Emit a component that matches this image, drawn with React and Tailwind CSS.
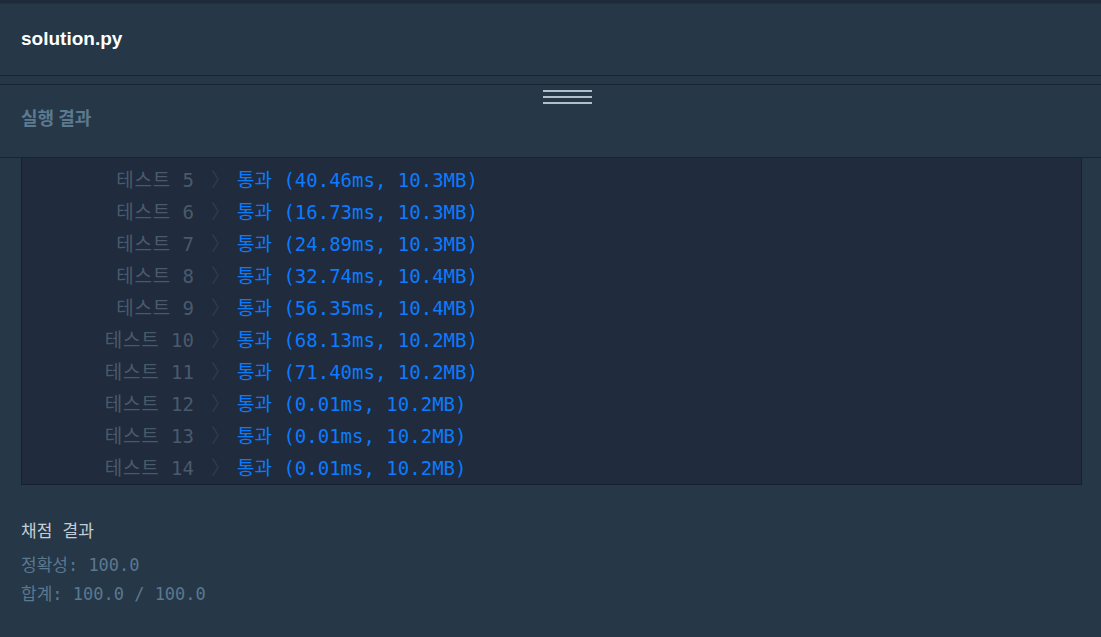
import React from "react";

const rows = [
  ["5", "(40.46ms, 10.3MB)"],
  ["6", "(16.73ms, 10.3MB)"],
  ["7", "(24.89ms, 10.3MB)"],
  ["8", "(32.74ms, 10.4MB)"],
  ["9", "(56.35ms, 10.4MB)"],
  ["10", "(68.13ms, 10.2MB)"],
  ["11", "(71.40ms, 10.2MB)"],
  ["12", "(0.01ms, 10.2MB)"],
  ["13", "(0.01ms, 10.2MB)"],
  ["14", "(0.01ms, 10.2MB)"],
];

const mono = "font-['DejaVu_Sans_Mono','Noto_Sans_CJK_KR',monospace]";

export default function App() {
  return (
    <div className="relative w-full h-[637px] bg-[#263747] overflow-hidden flex flex-col">
      <div className="h-[3px] bg-[#1e2a38] shrink-0" />
      <div className="h-[1px] bg-[#223142] shrink-0" />
      <div className="h-[72px] shrink-0 flex items-center px-[21px] border-b border-[#1a2532]">
        <span className="font-['Liberation_Sans','Noto_Sans_CJK_KR',sans-serif] font-bold text-[19px] text-white">
          solution.py
        </span>
      </div>
      <div className="h-[8px] shrink-0" />
      <div className="h-[74px] shrink-0 flex items-center px-[21px] pb-[7px] border-y border-[#1a2532]">
        <span className="font-['Noto_Sans_CJK_KR',sans-serif] font-bold text-[18px] text-[#5b798f]">
          실행 결과
        </span>
      </div>

      <div className="ml-[21px] mr-[19px] h-[327px] shrink-0 bg-[#202b3d] border-x border-b border-[#17202d] overflow-hidden">
        <div className="h-[6px]" />
        <div className={`${mono} text-[19px]`}>
          {rows.map(([n, r]) => (
            <div key={n} className="h-[32px] flex items-center whitespace-pre">
              <span className="w-[172px] text-right text-[#4a5a6b]">
                <span className="tracking-[0.8px]">테스트</span> {n}
              </span>
              <span className="ml-[17px] text-[#2f3c4f]">〉</span>
              <span className="ml-[7px] text-[#0b7bff]">통과 {r}</span>
            </div>
          ))}
        </div>
      </div>

      <div className={`px-[21px] mt-[32px] ${mono} text-[17px] leading-[29px]`}>
        <div className="text-[#c3ced6] mb-[5px]">채점 결과</div>
        <div className="text-[#5a7890]">정확성: 100.0</div>
        <div className="text-[#5a7890]">합계: 100.0 / 100.0</div>
      </div>

      <div className="absolute left-[543px] top-[90px] w-[49px] flex flex-col gap-[4px]">
        <div className="h-[2px] bg-[#b1bfc8]" />
        <div className="h-[2px] bg-[#b1bfc8]" />
        <div className="h-[2px] bg-[#b1bfc8]" />
      </div>
    </div>
  );
}
